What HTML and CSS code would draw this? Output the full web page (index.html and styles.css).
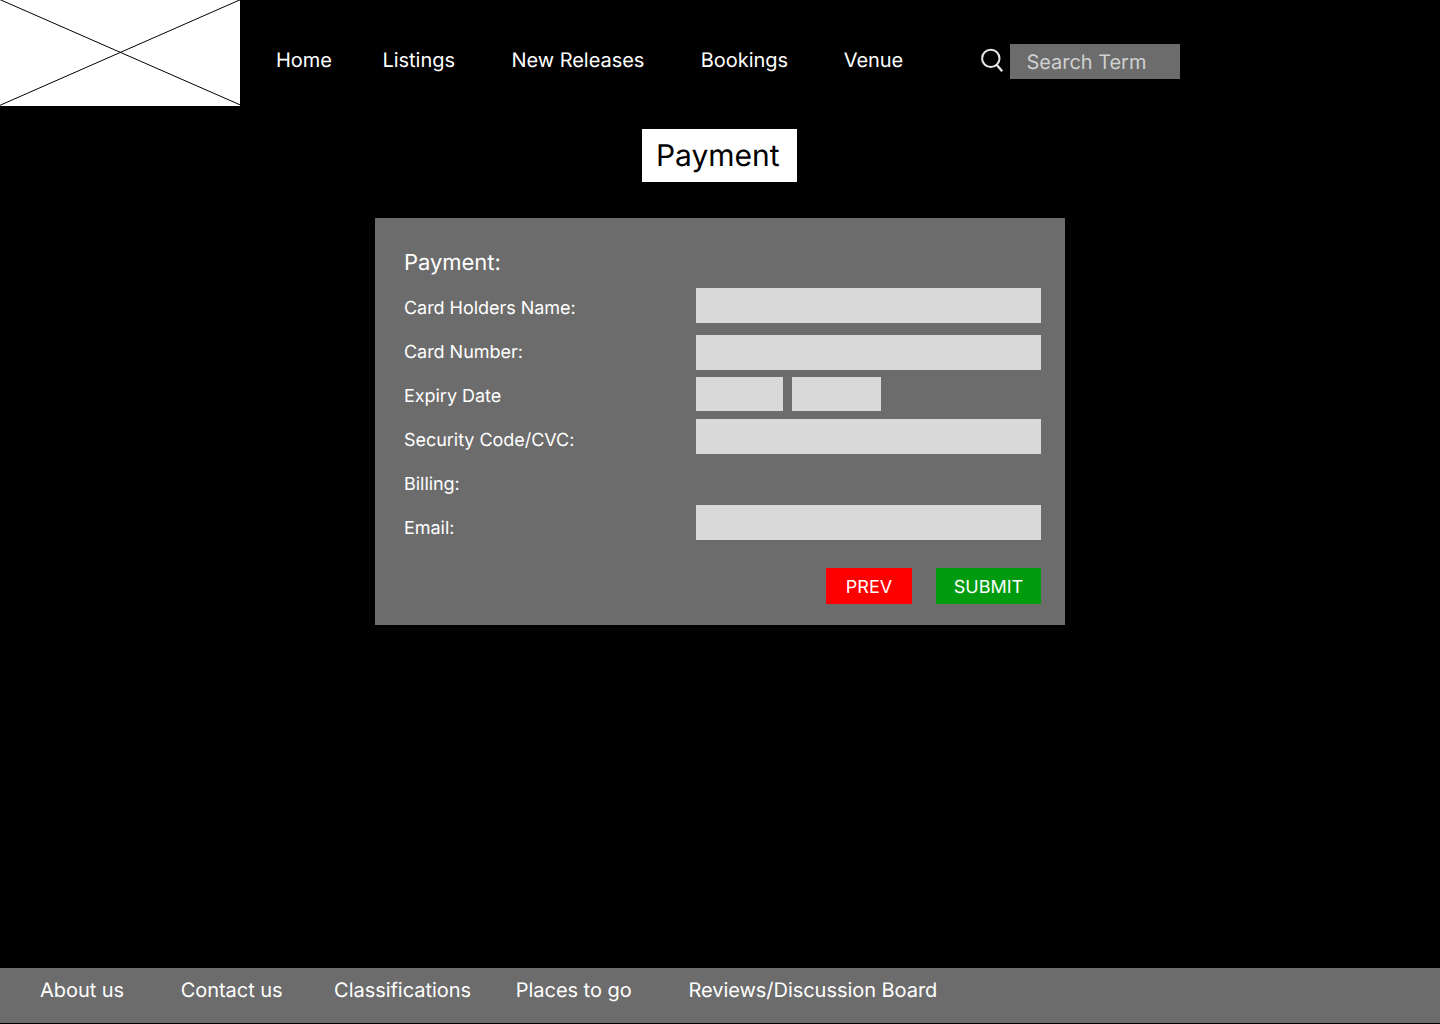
FILE: index.html
```html
<!DOCTYPE html>
<html lang="en">
<head>
<meta charset="utf-8">
<title>Payment</title>
<link rel="stylesheet" href="styles.css">
</head>
<body>
<header class="header">
  <svg class="logo" viewBox="0 0 240 106"><path d="M0 -0.4L240 104.8M0 105.3L240 -0.2" stroke="#000" fill="none"/></svg>
  <nav class="nav">
    <a>Home</a><a>Listings</a><a>New Releases</a><a>Bookings</a><a>Venue</a>
  </nav>
  <div class="search">
    <svg class="search-icon" viewBox="0 0 24 26" fill="none" stroke="#e8e8e8" stroke-width="2"><circle cx="10.8" cy="10.4" r="8.7"/><path d="M16.6 16.8L22.2 23.2" stroke-width="2.3"/></svg>
    <div class="search-box">Search Term</div>
  </div>
</header>
<main class="main">
  <h1 class="title">Payment</h1>
  <form class="card">
    <div class="labels">
      <h2 class="heading">Payment:</h2>
      <label>Card Holders Name:</label>
      <label>Card Number:</label>
      <label>Expiry Date</label>
      <label>Security Code/CVC:</label>
      <label>Billing:</label>
      <label>Email:</label>
    </div>
    <div class="fields">
      <div class="field"></div>
      <div class="field number"></div>
      <div class="expiry"><div class="month"></div><div class="year"></div></div>
      <div class="field code"></div>
      <div class="field email"></div>
      <div class="actions">
        <button type="button" class="btn prev">PREV</button>
        <button type="button" class="btn submit">SUBMIT</button>
      </div>
    </div>
  </form>
</main>
<footer class="footer">
  <a>About us</a><a>Contact us</a><a>Classifications</a><a>Places to go</a><a>Reviews/Discussion Board</a>
</footer>
</body>
</html>
```
FILE: styles.css
```css
* { box-sizing: border-box; }
body {
  margin: 0;
  height: 1024px;
  display: flex;
  flex-direction: column;
  overflow: hidden;
  background: #000;
  color: #fff;
  font-family: Inter, sans-serif;
  font-size: 20px;
  line-height: 24px;
  letter-spacing: -0.04px;
  text-rendering: geometricPrecision;
}
.header { display: flex; height: 106px; }
.logo { width: 240px; height: 106px; background: #fff; }
.nav {
  display: grid;
  grid-template-columns: 106.5px 129px 189.3px 142.9px 136.3px;
  padding: 48px 0 0 36px;
  white-space: nowrap;
}
.search { display: flex; padding-top: 44px; }
.search-icon { width: 24px; height: 26px; margin: 4px 6px 0 0; }
.search-box {
  width: 170px;
  height: 35px;
  padding: 6px 16.5px;
  background: #6c6c6c;
  color: #d0d0d0;
}
.main { display: flex; flex-direction: column; flex: 1; }
.title {
  width: 155px;
  height: 53px;
  margin: 23px 0 36px 642px;
  padding: 1px 0 0 14px;
  background: #fff;
  color: #000;
  font-size: 30px;
  font-weight: 400;
  line-height: 53px;
}
.card {
  display: flex;
  width: 690px;
  height: 407px;
  margin: 0 auto;
  padding: 0 24px 0 29px;
  background: #6c6c6c;
}
.labels { display: flex; flex-direction: column; width: 292px; padding-top: 32px; font-size: 18px; line-height: 22px; }
.labels label { margin-bottom: 22px; }
.heading { margin: 0 0 21px; font-size: 22px; font-weight: 400; line-height: 27px; }
.fields { width: 345px; padding-top: 70px; }
.field { height: 35px; background: #d9d9d9; }
.number { margin-top: 12px; }
.expiry { display: flex; gap: 9px; height: 34px; margin: 7px 0 8px; }
.month { width: 87px; background: #d9d9d9; }
.year { width: 89px; background: #d9d9d9; }
.email { margin-top: 51px; }
.actions { display: flex; justify-content: flex-end; gap: 24px; margin-top: 28px; }
.btn {
  height: 36px;
  padding: 3px 0 0;
  border: 0;
  color: #fff;
  font: 18px/33px Inter, sans-serif;
  text-rendering: inherit;
}
.prev { width: 86px; background: #f00; }
.submit { width: 105px; background: #009b0f; }
.footer {
  display: grid;
  grid-template-columns: 140.7px 153.4px 181.7px 172.7px auto;
  height: 55px;
  margin-bottom: 1px;
  padding: 10px 0 0 40px;
  background: #6c6c6c;
  white-space: nowrap;
}
```
